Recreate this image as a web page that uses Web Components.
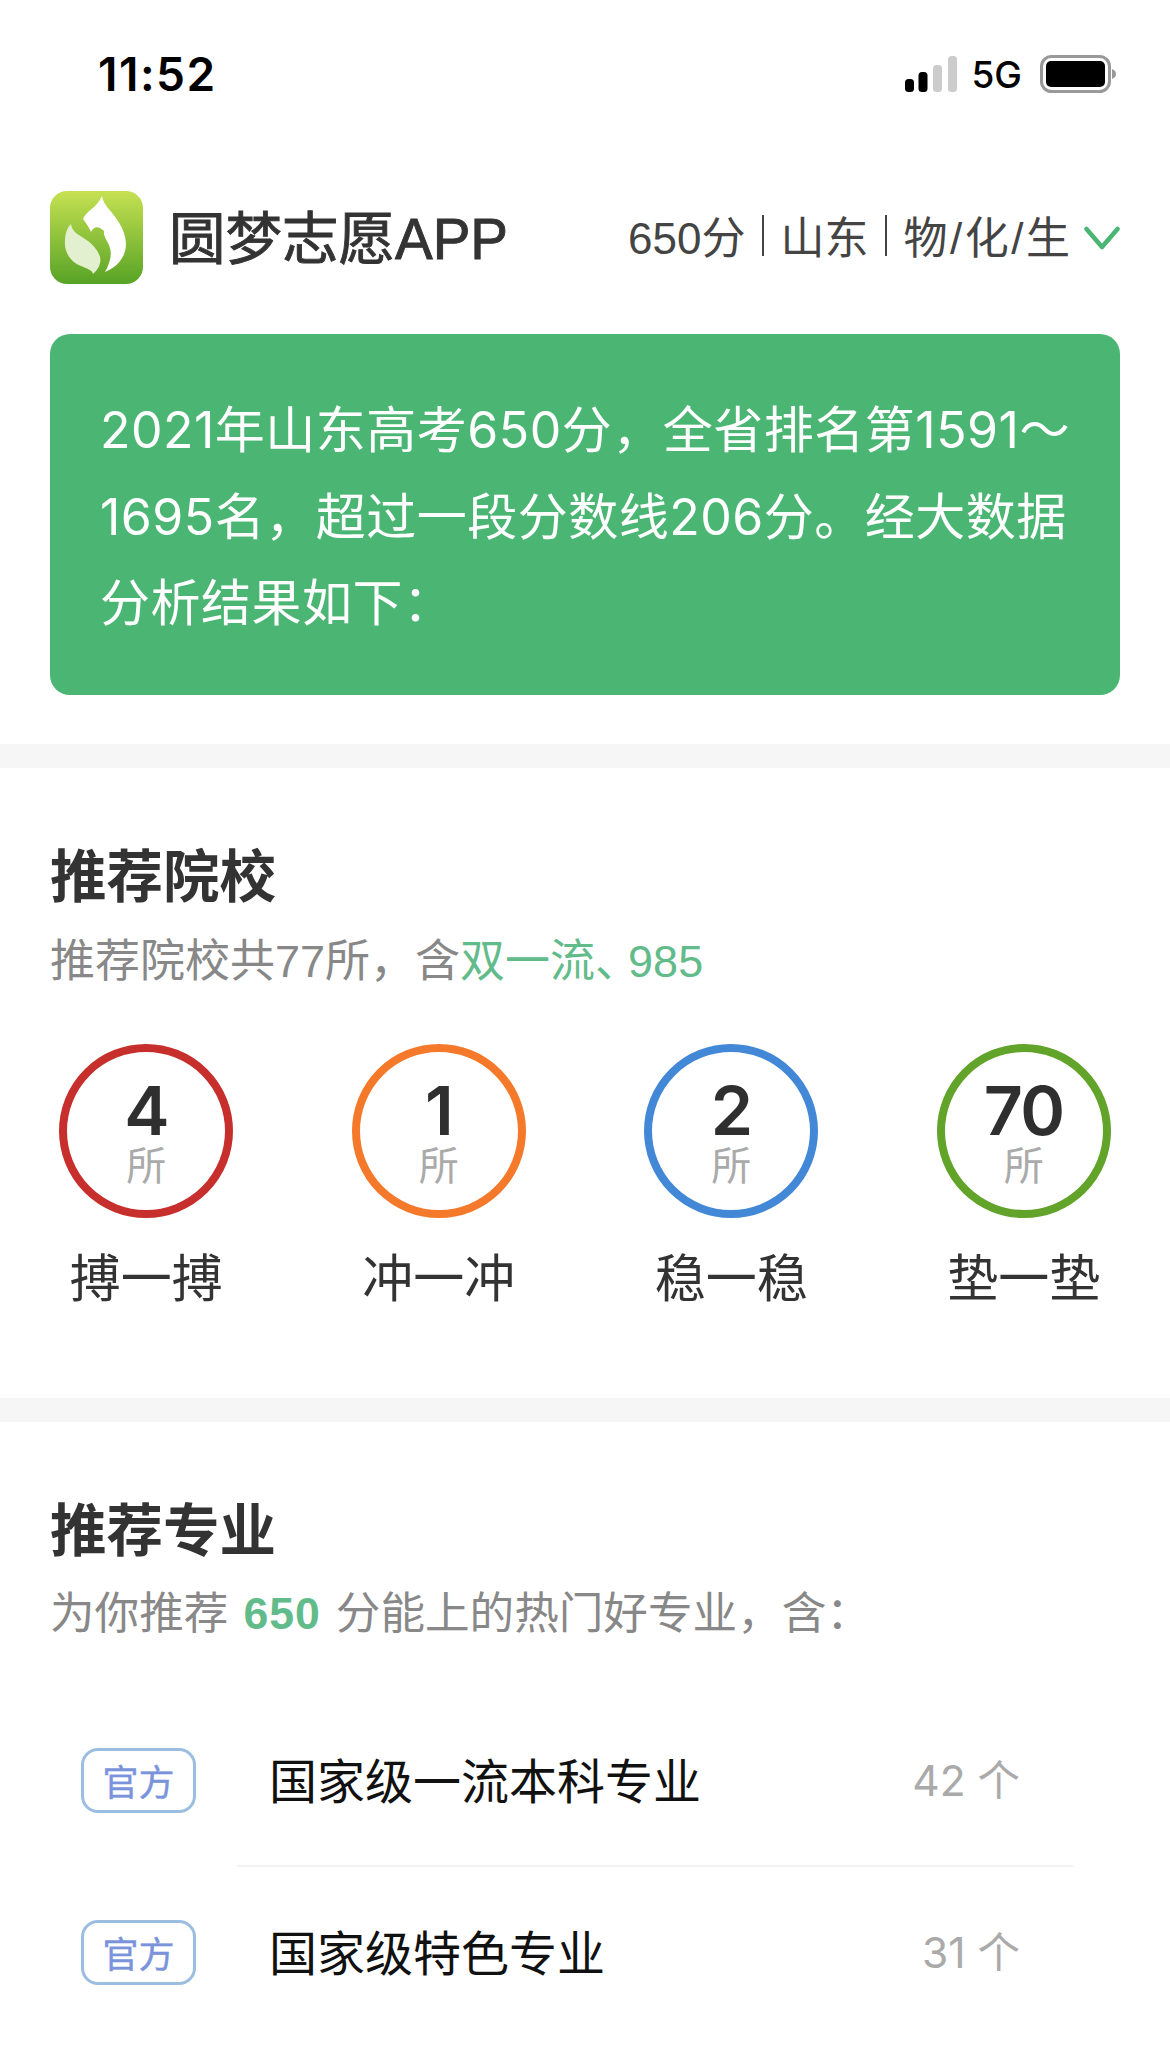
<!DOCTYPE html>
<html lang="zh">
<head>
<meta charset="utf-8">
<title>圆梦志愿APP</title>
<style>
  html, body { margin: 0; padding: 0; background: #fff; }
  body {
    width: 1170px;
    height: 2052px;
    overflow: hidden;
    font-family: "Liberation Sans", "Noto Sans CJK SC", sans-serif;
  }
</style>
</head>
<body>
<status-bar></status-bar>
<app-header></app-header>
<score-card>2021年山东高考650分，全省排名第1591～1695名，超过一段分数线206分。经大数据分析结果如下：</score-card>
<band-divider></band-divider>
<section-block class="schools" heading="推荐院校">
  <span slot="sub" style="font-size:45px">推荐院校共77所，含<em style="color:#62bb8a;font-style:normal">双一流<span style="letter-spacing:-12px">、</span>985</em></span>
  <div style="display:grid;grid-template-columns:repeat(4,1fr);margin:0 -50px">
    <count-ring value="4" label="搏一搏" color="#c62f2b"></count-ring>
    <count-ring value="1" label="冲一冲" color="#f5792a"></count-ring>
    <count-ring value="2" label="稳一稳" color="#4288d6"></count-ring>
    <count-ring value="70" label="垫一垫" color="#62a32a"></count-ring>
  </div>
</section-block>
<band-divider></band-divider>
<section-block class="majors" heading="推荐专业">
  <span slot="sub" style="font-size:44.6px">为你推荐<b style="color:#62bb8a;letter-spacing:1px;margin:0 15px">650</b>分能上的热门好专业，含：</span>
  <div style="padding-top:51px">
    <major-row name="国家级一流本科专业" count="42"></major-row>
    <major-row name="国家级特色专业" count="31" last></major-row>
  </div>
</section-block>

<script>
class StatusBar extends HTMLElement {
  constructor () {
    super()
    this.attachShadow({ mode: 'open' }).innerHTML = `
      <style>
        :host { display: flex; justify-content: space-between; align-items: center; height: 66px; padding: 41px 54px 0 98px; color: #000; }
        .time { font-family: Inter, sans-serif; font-size: 46px; font-weight: 600; letter-spacing: 1.5px; }
        .right { display: flex; align-items: center; gap: 14px; }
        .net { font-family: Inter, sans-serif; font-size: 37px; font-weight: 500; }
        svg { display: block; }
      </style>
      <span class="time">11:52</span>
      <div class="right">
        <svg width="52" height="36" viewBox="0 0 52 36">
          <rect x="0" y="23" width="9" height="13" rx="3.5" fill="#000"/>
          <rect x="13.5" y="16" width="9" height="20" rx="3.5" fill="#000"/>
          <rect x="28" y="9" width="9" height="27" rx="3.5" fill="#ccc"/>
          <rect x="43" y="0" width="9" height="36" rx="3.5" fill="#ccc"/>
        </svg>
        <span class="net">5G</span>
        <svg width="76" height="38" viewBox="0 0 76 38" style="margin-left:4px">
          <rect x="1.5" y="1.5" width="68" height="35" rx="10" fill="none" stroke="#999" stroke-width="3"/>
          <rect x="6" y="6" width="59" height="26" rx="5" fill="#000"/>
          <path d="M72 14 C75 15 76 17 76 19 C76 21 75 23 72 24 Z" fill="#999"/>
        </svg>
      </div>
    `
  }
}

class AppHeader extends HTMLElement {
  constructor () {
    super()
    this.attachShadow({ mode: 'open' }).innerHTML = `
      <style>
        :host { display: flex; justify-content: space-between; align-items: center; padding: 84px 50px 0; height: 93px; }
        .brand { display: flex; align-items: center; gap: 26px; font-size: 56.5px; color: #333; -webkit-text-stroke: .9px #333; }
        .brand span { position: relative; top: -4px; }
        .filter { display: flex; align-items: center; gap: 14px; font-size: 44px; color: #444; }
        .items { display: flex; align-items: center; gap: 16.5px; position: relative; top: -3px; }
        svg { display: block; }
        i { display: block; width: 2px; height: 41px; background: #444; position: relative; top: 1px; }
        u { text-decoration: none; margin: 0 2.5px; }
      </style>
      <div class="brand">
        <svg width="93" height="93" viewBox="0 0 93 93">
          <defs>
            <linearGradient id="g" x1="0" y1="0" x2="0" y2="1">
              <stop offset="0" stop-color="#c6e152"/>
              <stop offset="1" stop-color="#57a325"/>
            </linearGradient>
          </defs>
          <rect width="93" height="93" rx="17" fill="url(#g)"/>
          <path d="M52 5C53 14 62 20 68 30C76 42 79 56 72 67C68 74 62 78 55 81C60 72 62 64 60 57C58 50 53 46 54 40L50 37C46 35 43 37 41 41C39 36 36 32 33 28C36 20 47 17 52 5Z" fill="#fff"/>
          <path d="M21 33C22 42 30 44 38 50C47 57 52 66 50 72C49 77 46 80 43 83C42 79 38 78 31 75C20 71 14 60 15 50C15 43 17 37 21 33Z" fill="#e3f0d0"/>
        </svg>
        <span>圆梦志愿APP</span>
      </div>
      <div class="filter">
        <div class="items"><span>650分</span><i></i><span>山东</span><i></i><span>物<u>/</u>化<u>/</u>生</span></div>
        <svg width="36" height="24" viewBox="0 0 36 24"><path d="M2.5 3 L18 21 L33.5 3" fill="none" stroke="#4bb673" stroke-width="4.5" stroke-linecap="round" stroke-linejoin="round"/></svg>
      </div>
    `
  }
}

class ScoreCard extends HTMLElement {
  constructor () {
    super()
    this.attachShadow({ mode: 'open' }).innerHTML = `
      <style>
        :host { display: block; margin: 50px 50px 49px; padding: 53px 35px 47px 50px; height: 261px; background: #4bb673; border-radius: 20px; color: #fff; font-family: Inter, "Noto Sans CJK SC", sans-serif; font-size: 50px; letter-spacing: .5px; line-height: 86.5px; }
      </style>
      <slot></slot>
    `
  }
}

class BandDivider extends HTMLElement {
  constructor () {
    super()
    this.attachShadow({ mode: 'open' }).innerHTML = `
      <style>:host { display: block; height: 24px; background: #f6f6f6; }</style>
    `
  }
}

class SectionBlock extends HTMLElement {
  constructor () {
    super()
    this.attachShadow({ mode: 'open' }).innerHTML = `
      <style>
        :host { display: block; padding: 70px 50px 0; }
        :host(.schools) { height: 560px; }
        h2 { margin: 0; font-size: 56.5px; line-height: 80px; font-weight: 700; color: #333; }
        .sub { font-size: 44px; line-height: 60px; color: #888; margin-top: 12px; }
        :host(.schools) .sub { margin-top: 14px; margin-bottom: 52px; }
      </style>
      <h2></h2>
      <div class="sub"><slot name="sub"></slot></div>
      <slot></slot>
    `
    this.shadowRoot.querySelector('h2').textContent = this.getAttribute('heading')
  }
}

class CountRing extends HTMLElement {
  constructor () {
    super()
    const color = this.getAttribute('color')
    this.attachShadow({ mode: 'open' }).innerHTML = `
      <style>
        :host { display: flex; flex-direction: column; align-items: center; }
        .ring { box-sizing: border-box; width: 174px; height: 174px; border: 8.5px solid ${color}; border-radius: 50%; display: flex; flex-direction: column; align-items: center; justify-content: center; }
        .num { font-family: Inter, sans-serif; font-size: 68px; line-height: 66px; font-weight: 600; letter-spacing: -1.5px; color: #2f2f2f; margin-top: 4px; }
        .unit { font-size: 40px; line-height: 46px; color: #aaa; }
        .label { margin-top: 30px; font-size: 51px; line-height: 64px; color: #333; }
      </style>
      <div class="ring">
        <span class="num">${this.getAttribute('value')}</span>
        <span class="unit">所</span>
      </div>
      <span class="label">${this.getAttribute('label')}</span>
    `
  }
}

class MajorRow extends HTMLElement {
  constructor () {
    super()
    this.attachShadow({ mode: 'open' }).innerHTML = `
      <style>
        :host { display: block; margin: 0 47px 0 31px; }
        .row { display: flex; align-items: center; height: 170px; }
        .badge { box-sizing: border-box; flex: none; width: 115px; height: 65px; border: 3px solid #9bbde0; border-radius: 17px; display: flex; align-items: center; justify-content: center; font-size: 36px; -webkit-text-stroke: .4px #7b93db; color: #7b93db; }
        .name { flex: 1; margin-left: 73px; padding-bottom: 5px; font-size: 48px; color: #111; }
        .count { font-family: Inter, "Noto Sans CJK SC", sans-serif; font-size: 42.5px; color: #aaa; margin-right: 53px; padding-bottom: 5px; }
        .line { height: 2px; margin-left: 156px; background: #f3f3f3; }
        :host([last]) .line { display: none; }
      </style>
      <div class="row">
        <span class="badge">官方</span>
        <span class="name">${this.getAttribute('name')}</span>
        <span class="count">${this.getAttribute('count')} 个</span>
      </div>
      <div class="line"></div>
    `
  }
}

window.customElements.define('status-bar', StatusBar)
window.customElements.define('app-header', AppHeader)
window.customElements.define('score-card', ScoreCard)
window.customElements.define('band-divider', BandDivider)
window.customElements.define('section-block', SectionBlock)
window.customElements.define('count-ring', CountRing)
window.customElements.define('major-row', MajorRow)
</script>
</body>
</html>
